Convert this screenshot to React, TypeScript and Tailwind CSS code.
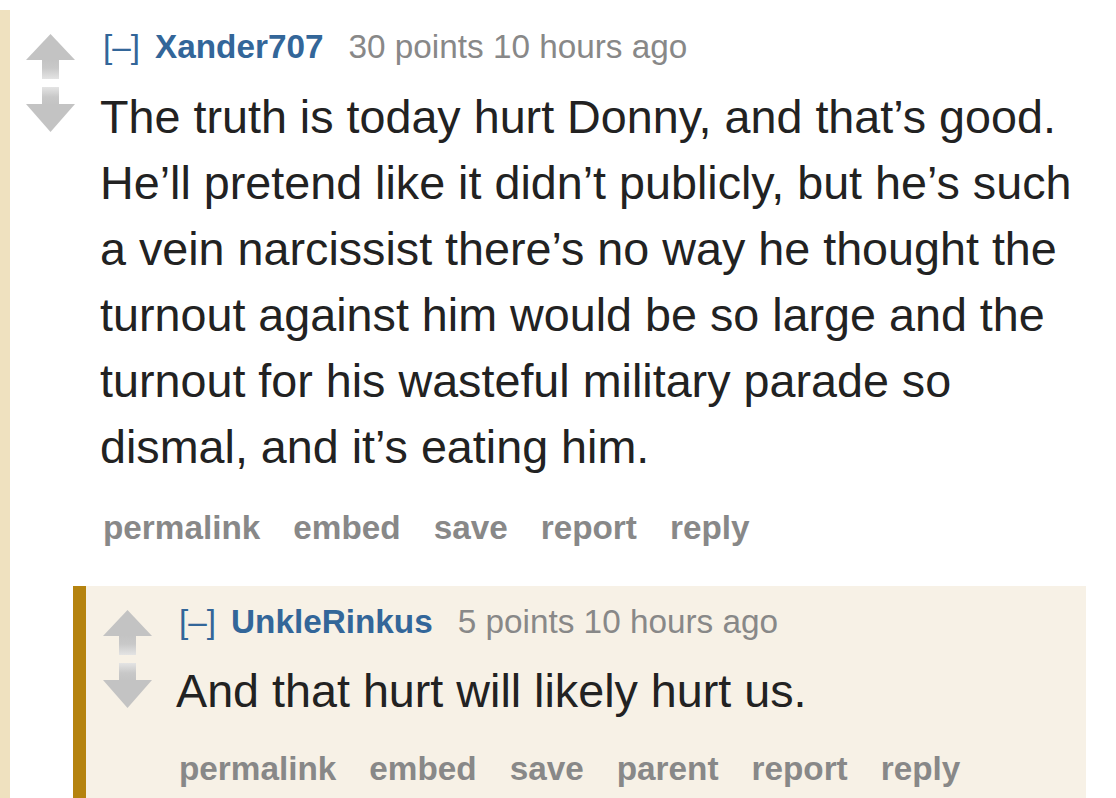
import React from "react"

type Comment = {
    author: string
    score: string
    time: string
    body: string
    buttons: string[]
}

const outer: Comment = {
    author: "Xander707",
    score: "30 points",
    time: "10 hours ago",
    body: "The truth is today hurt Donny, and that’s good. He’ll pretend like it didn’t publicly, but he’s such a vein narcissist there’s no way he thought the turnout against him would be so large and the turnout for his wasteful military parade so dismal, and it’s eating him.",
    buttons: ["permalink", "embed", "save", "report", "reply"],
}

const child: Comment = {
    author: "UnkleRinkus",
    score: "5 points",
    time: "10 hours ago",
    body: "And that hurt will likely hurt us.",
    buttons: ["permalink", "embed", "save", "parent", "report", "reply"],
}

function UpArrow({ id }: { id: string }) {
    return (
        <svg width="50" height="47" viewBox="0 0 50 47">
            <defs>
                <linearGradient id={id} x1="0" y1="0" x2="0" y2="1">
                    <stop offset="0" stopColor="#c3c3c3" />
                    <stop offset="0.45" stopColor="#c8c8c8" />
                    <stop offset="1" stopColor="#e4e4e4" />
                </linearGradient>
            </defs>
            <polygon points="0,27 24.5,1 49,27" fill="#c3c3c3" />
            <rect x="16" y="26" width="17" height="20" fill={`url(#${id})`} />
        </svg>
    )
}

function DownArrow({ id }: { id: string }) {
    return (
        <svg width="50" height="47" viewBox="0 0 50 47">
            <defs>
                <linearGradient id={id} x1="0" y1="0" x2="0" y2="1">
                    <stop offset="0" stopColor="#e4e4e4" />
                    <stop offset="0.55" stopColor="#c8c8c8" />
                    <stop offset="1" stopColor="#c3c3c3" />
                </linearGradient>
            </defs>
            <rect x="16" y="0" width="17" height="18" fill={`url(#${id})`} />
            <polygon points="0,17 49,17 24.5,45" fill="#c3c3c3" />
        </svg>
    )
}

function Arrows({ name }: { name: string }) {
    return (
        <div className="flex flex-col gap-[7px] w-[50px] shrink-0">
            <UpArrow id={name + "-up"} />
            <DownArrow id={name + "-down"} />
        </div>
    )
}

function Tagline({ c }: { c: Comment }) {
    return (
        <p className="text-[33.3px] leading-[40px] pl-[3px] whitespace-nowrap">
            <span className="text-[#336699]">[–]</span>
            <span className="ml-[15px] font-bold text-[#336699]">{c.author}</span>
            <span className="ml-[25px] text-[#888888]">{c.score} {c.time}</span>
        </p>
    )
}

function Buttons({ items }: { items: string[] }) {
    return (
        <ul className="flex gap-[33px] pl-[3px] text-[33.3px] leading-[40px] font-bold text-[#888888]">
            {items.map((b) => (
                <li key={b}>{b}</li>
            ))}
        </ul>
    )
}

export default function App() {
    return (
        <div className="min-h-[798px] bg-white text-[#222222]" style={{ fontFamily: '"Liberation Sans", Arial, sans-serif' }}>
            <div className="mt-[10px] border-l-[10px] border-[#efe1bf] pr-[30px] min-h-[788px]">
                <div className="flex">
                    <div className="pl-[16px] pt-[23px]">
                        <Arrows name="outer" />
                    </div>
                    <div className="ml-[24px] flex-1 pt-[17px]">
                        <Tagline c={outer} />
                        <p className="mt-[17px] text-[46.7px] leading-[66px]">{outer.body}</p>
                        <div className="mt-[28px]">
                            <Buttons items={outer.buttons} />
                        </div>
                    </div>
                </div>

                <div className="ml-[63px] mt-[38px] border-l-[13px] border-[#b5830f] bg-[#f7f1e6] pb-[20px]">
                    <div className="flex">
                        <div className="pl-[17px] pt-[23px]">
                            <Arrows name="child" />
                        </div>
                        <div className="ml-[23px] flex-1 pt-[16px]">
                            <Tagline c={child} />
                            <p className="mt-[16px] text-[46.7px] leading-[66px]">{child.body}</p>
                            <div className="mt-[25px]">
                                <Buttons items={child.buttons} />
                            </div>
                        </div>
                    </div>
                </div>
            </div>
        </div>
    )
}
